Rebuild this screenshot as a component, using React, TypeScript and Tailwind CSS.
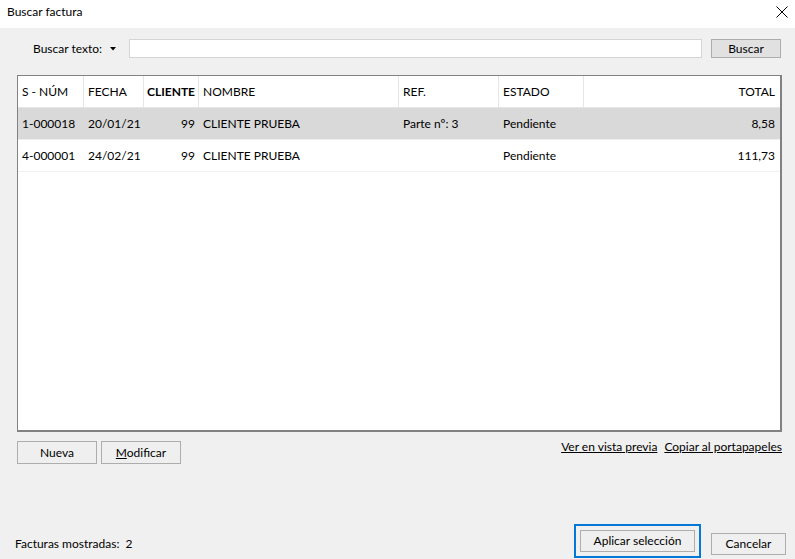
import React from 'react';

const font = { fontFamily: '"Segoe UI", Lato, "Noto Sans", sans-serif' };

type Row = { num: string; fecha: string; cliente: string; nombre: string; ref: string; estado: string; total: string };

const rows: Row[] = [
  { num: '1-000018', fecha: '20/01/21', cliente: '99', nombre: 'CLIENTE PRUEBA', ref: 'Parte nº: 3', estado: 'Pendiente', total: '8,58' },
  { num: '4-000001', fecha: '24/02/21', cliente: '99', nombre: 'CLIENTE PRUEBA', ref: '', estado: 'Pendiente', total: '111,73' },
];

const cols = 'grid grid-cols-[66px_60px_55px_200px_100px_85px_1fr]';

function WinButton({ children, className = '' }: { children: React.ReactNode; className?: string }) {
  return (
    <button
      className={`flex items-center justify-center border border-[#adadad] bg-[#e1e1e1] text-[12px] text-black ${className}`}
    >
      {children}
    </button>
  );
}

export default function App() {
  return (
    <div className="flex h-[559px] w-[795px] flex-col bg-[#f0f0f0] text-[12px] text-black" style={font}>
      {/* title bar */}
      <div className="flex h-[28px] items-center justify-between bg-white pb-[4px] pl-[7px] pr-[7px]">
        <span className="text-[12px]">Buscar factura</span>
        <svg width="12" height="12" viewBox="0 0 12 12">
          <path d="M0.5 0.5 L11.5 11.5 M11.5 0.5 L0.5 11.5" stroke="#000" strokeWidth="1" />
        </svg>
      </div>

      {/* search row */}
      <div className="mt-[11px] flex h-[19px] items-center">
        <span className="ml-[33px] w-[77px] whitespace-nowrap">Buscar texto:</span>
        <svg width="6" height="4" viewBox="0 0 6 4">
          <path d="M0 0 H6 L3 3.5 Z" fill="#000" />
        </svg>
        <div className="ml-[13px] h-[19px] w-[573px] border border-[#d5d5d5] bg-white" />
        <WinButton className="ml-[9px] h-[19px] w-[70px]">Buscar</WinButton>
      </div>

      {/* grid */}
      <div className="ml-[17px] mt-[17px] flex h-[357px] w-[765px] flex-col border border-r-2 border-b-2 border-[#828282] bg-white">
        <div className={`${cols} h-[32px] border-b border-[#e5e5e5]`}>
          <div className="flex items-center border-r border-[#e5e5e5] pl-[4px]">S - NÚM</div>
          <div className="flex items-center border-r border-[#e5e5e5] pl-[4px]">FECHA</div>
          <div className="flex items-center justify-end border-r border-[#e5e5e5] pr-[3px] font-bold">CLIENTE</div>
          <div className="flex items-center border-r border-[#e5e5e5] pl-[4px]">NOMBRE</div>
          <div className="flex items-center border-r border-[#e5e5e5] pl-[4px]">REF.</div>
          <div className="flex items-center border-r border-[#e5e5e5] pl-[4px]">ESTADO</div>
          <div className="flex items-center justify-end pr-[5px]">TOTAL</div>
        </div>
        {rows.map((r, i) => (
          <div
            key={r.num}
            className={`${cols} h-[32px] border-b border-[#f0f0f0] ${i === 0 ? 'bg-[#d9d9d9]' : 'bg-white'}`}
          >
            <div className="flex items-center pl-[4px]">{r.num}</div>
            <div className="flex items-center pl-[4px]">{r.fecha}</div>
            <div className="flex items-center justify-end pr-[4px]">{r.cliente}</div>
            <div className="flex items-center pl-[4px]">{r.nombre}</div>
            <div className="flex items-center pl-[4px]">{r.ref}</div>
            <div className="flex items-center pl-[4px]">{r.estado}</div>
            <div className="flex items-center justify-end pr-[5px]">{r.total}</div>
          </div>
        ))}
      </div>

      {/* actions under grid */}
      <div className="ml-[17px] mt-[9px] flex w-[765px] items-center">
        <WinButton className="h-[23px] w-[80px] bg-[#efefef]">Nueva</WinButton>
        <WinButton className="ml-[4px] h-[23px] w-[80px] bg-[#efefef]">
          <span>
            <span className="underline">M</span>odificar
          </span>
        </WinButton>
        <div className="ml-auto flex gap-[7px] self-start leading-[14px] -mt-[1px]">
          <span className="underline">Ver en vista previa</span>
          <span className="underline">Copiar al portapapeles</span>
        </div>
      </div>

      {/* footer */}
      <div className="mt-auto mb-[1px] flex items-center">
        <span className="ml-[15px] mt-[6px]">Facturas mostradas:&nbsp; 2</span>
        <div className="ml-auto border-2 border-[#0078d7] p-[4px]">
          <WinButton className="h-[22px] w-[115px] bg-[#efefef]">Aplicar selección</WinButton>
        </div>
        <WinButton className="ml-[10px] mr-[9px] mt-[6px] h-[22px] w-[75px] bg-[#efefef]">Cancelar</WinButton>
      </div>
    </div>
  );
}
